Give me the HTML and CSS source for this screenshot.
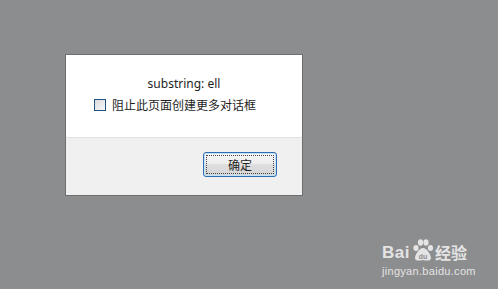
FILE: index.html
```html
<!DOCTYPE html>
<html lang="zh-CN">
<head>
    <meta charset="UTF-8">
    <title>substring</title>
    <link rel="stylesheet" href="styles.css">
</head>
<body>

<div class="dialog">
    <div class="dialog-body">
        <p class="message">substring: ell</p>
        <label class="suppress">
            <span class="box"></span>
            <span>阻止此页面创建更多对话框</span>
        </label>
    </div>
    <div class="dialog-footer">
        <button class="ok"><span class="focus">确定</span></button>
    </div>
</div>

<div class="watermark">
    <div class="brand">
        <span class="bai">Bai</span>
        <svg class="paw" width="24" height="24" viewBox="0 0 24 24">
            <ellipse cx="5" cy="10" rx="2.6" ry="3" fill="#e4e4e4"/>
            <ellipse cx="9.5" cy="4.5" rx="2.6" ry="3.2" fill="#e4e4e4"/>
            <ellipse cx="15" cy="4.5" rx="2.6" ry="3.2" fill="#e4e4e4"/>
            <ellipse cx="19.5" cy="10" rx="2.6" ry="3" fill="#e4e4e4"/>
            <path d="M12 10 C8 10 4 17 4 20 C4 23 8 23 12 22 C16 23 20 23 20 20 C20 17 16 10 12 10 Z" fill="#e4e4e4"/>
            <text x="12" y="20.5" text-anchor="middle" class="du">du</text>
        </svg>
        <span class="jy">经验</span>
    </div>
    <div class="site">jingyan.baidu.com</div>
</div>

</body>
</html>
```

FILE: styles.css
```css
body {
    margin: 0;
    background-color: #8c8d8f; /* grey page behind the dialog */
    font-family: "Noto Sans", "Noto Sans CJK SC", sans-serif;
    font-size: 12px;
    color: #1e1e1e;
    height: 289px;
    overflow: hidden;
    position: relative;
}
.dialog {
    margin: 54px 0 0 65px;
    width: 236px;
    border: 1px solid #6e6e6e;
    background-color: #ffffff;
}
.dialog-body {
    height: 82px;
    box-sizing: border-box;
    padding-top: 21px;
}
.message {
    margin: 0;
    text-align: center;
    line-height: 16px;
}
.suppress {
    display: flex;
    align-items: center;
    gap: 6px;
    margin: 5px 0 0 28px;
    line-height: 16px;
    font-family: "Noto Sans CJK SC", sans-serif;
}
.box {
    width: 10px;
    height: 10px;
    border: 1px solid #1d5283;
    background: linear-gradient(135deg, #dcdcdc, #f6f6f6);
}
.dialog-footer {
    height: 58px;
    box-sizing: border-box;
    border-top: 1px solid #e2e2e2;
    background-color: #f0f0f0;
    display: flex;
    justify-content: flex-end;
    align-items: flex-start;
    padding: 14px 25px 0 0;
}
.ok {
    width: 74px;
    height: 25px;
    padding: 2px;
    border: 1px solid #2f6db3;
    border-radius: 3px;
    background: linear-gradient(#f7f7f7, #ececec 50%, #dedede 50%, #d6d6d6);
    box-shadow: inset 0 0 0 1px #c4e2f7;
    font-family: "Noto Sans CJK SC", sans-serif;
    font-size: 12px;
    color: #1e1e1e;
}
.focus {
    display: flex;
    align-items: center;
    justify-content: center;
    height: 100%;
    box-sizing: border-box;
    border: 1px dotted #444;
}
.watermark {
    position: absolute;
    left: 382px;
    top: 236px;
    color: #e4e4e4;
}
.brand {
    display: flex;
    align-items: flex-end;
    height: 25px;
}
.bai {
    font-family: "Liberation Sans", Arial, sans-serif;
    font-weight: bold;
    font-size: 17px;
    line-height: 17px;
    letter-spacing: 0.5px;
}
.paw {
    margin: 0 0 -1px 1px;
}
.du {
    font-family: "Liberation Sans", Arial, sans-serif;
    font-weight: bold;
    font-size: 7px;
    fill: #8c8d8f;
}
.jy {
    font-family: "Noto Sans CJK SC", sans-serif;
    font-weight: bold;
    font-size: 16px;
    line-height: 18px;
}
.site {
    margin-top: 4px;
    font-family: "Liberation Sans", Arial, sans-serif;
    font-size: 11px;
    line-height: 12px;
    letter-spacing: 0.3px;
}
```
